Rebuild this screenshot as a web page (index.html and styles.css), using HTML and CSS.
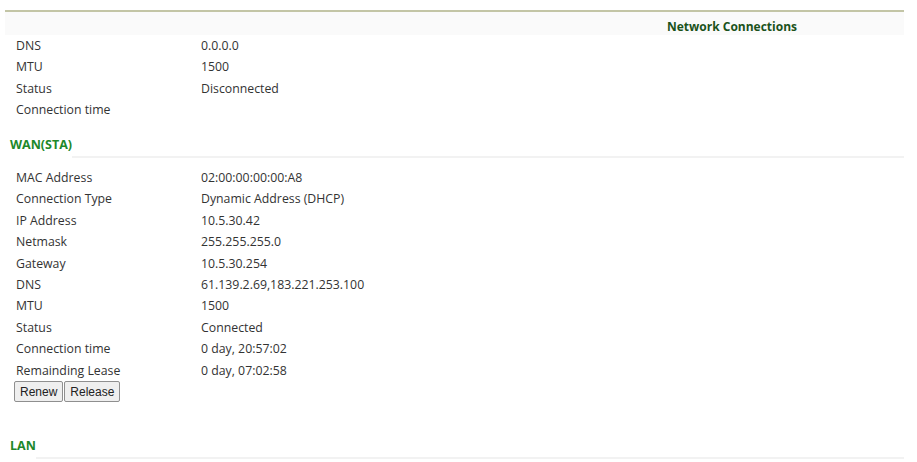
FILE: index.html
```html
<!DOCTYPE html>
<html lang="en">
<head>
    <meta charset="utf-8">
    <title>Network Connections</title>
    <link rel="stylesheet" href="styles.css">
</head>
<body>
    <div class="page">
        <div class="title">Network Connections</div>

        <div class="info">
            <div class="row"><span class="key">DNS</span><span>0.0.0.0</span></div>
            <div class="row"><span class="key">MTU</span><span>1500</span></div>
            <div class="row"><span class="key">Status</span><span>Disconnected</span></div>
            <div class="row"><span class="key">Connection time</span><span></span></div>
        </div>

        <div class="section"><span>WAN(STA)</span><i></i></div>
        <div class="info">
            <div class="row"><span class="key">MAC Address</span><span>02:00:00:00:00:A8</span></div>
            <div class="row"><span class="key">Connection Type</span><span>Dynamic Address (DHCP)</span></div>
            <div class="row"><span class="key">IP Address</span><span>10.5.30.42</span></div>
            <div class="row"><span class="key">Netmask</span><span>255.255.255.0</span></div>
            <div class="row"><span class="key">Gateway</span><span>10.5.30.254</span></div>
            <div class="row"><span class="key">DNS</span><span>61.139.2.69,183.221.253.100</span></div>
            <div class="row"><span class="key">MTU</span><span>1500</span></div>
            <div class="row"><span class="key">Status</span><span>Connected</span></div>
            <div class="row"><span class="key">Connection time</span><span>0 day, 20:57:02</span></div>
            <div class="row"><span class="key">Remainding Lease</span><span>0 day, 07:02:58</span></div>
        </div>
        <div class="btns">
            <button>Renew</button><button>Release</button>
        </div>

        <div class="section lan"><span>LAN</span><i></i></div>
    </div>
</body>
</html>
```

FILE: styles.css
```css
body {
    margin: 0;
    background: #fff;
    font-family: "Open Sans", "Noto Sans", sans-serif;
    font-size: 12.3px;
    color: #333;
}

.page {
    margin: 10px 0 0 5px;
    width: 899px;
    border-top: 2px solid #c3c5a6;
}

.title {
    height: 17px;
    line-height: 17px;
    padding: 6px 0 0 662px;
    background: #fafafa;
    font-weight: bold;
    font-size: 12px;
    color: #1b521b;
}

.info {
    padding-left: 11px;
}

.row {
    display: grid;
    grid-template-columns: 185px 1fr;
    height: 21.45px;
    line-height: 21.45px;
}

/* 分區標題 */
.section {
    display: flex;
    height: 23px;
    padding: 14px 0 0 5px;
    margin-bottom: 9px;
    font-weight: bold;
    font-size: 12.5px;
    color: #20882a;
}

.section span {
    line-height: 20px;
}

.section i {
    flex: 1;
    border-bottom: 2px solid #f2f2f2;
}

.section.lan {
    padding-top: 34px;
}

.btns {
    display: flex;
    padding-left: 9px;
    height: 21px;
}

button {
    font-family: Arial, "Liberation Sans", sans-serif;
    font-size: 12px;
    color: #222;
    height: 21px;
    padding: 0 5px;
    margin: 0 1px 0 0;
    background: #efefef;
    border: 1px solid #8f8f8f;
    border-radius: 2px;
}
```
